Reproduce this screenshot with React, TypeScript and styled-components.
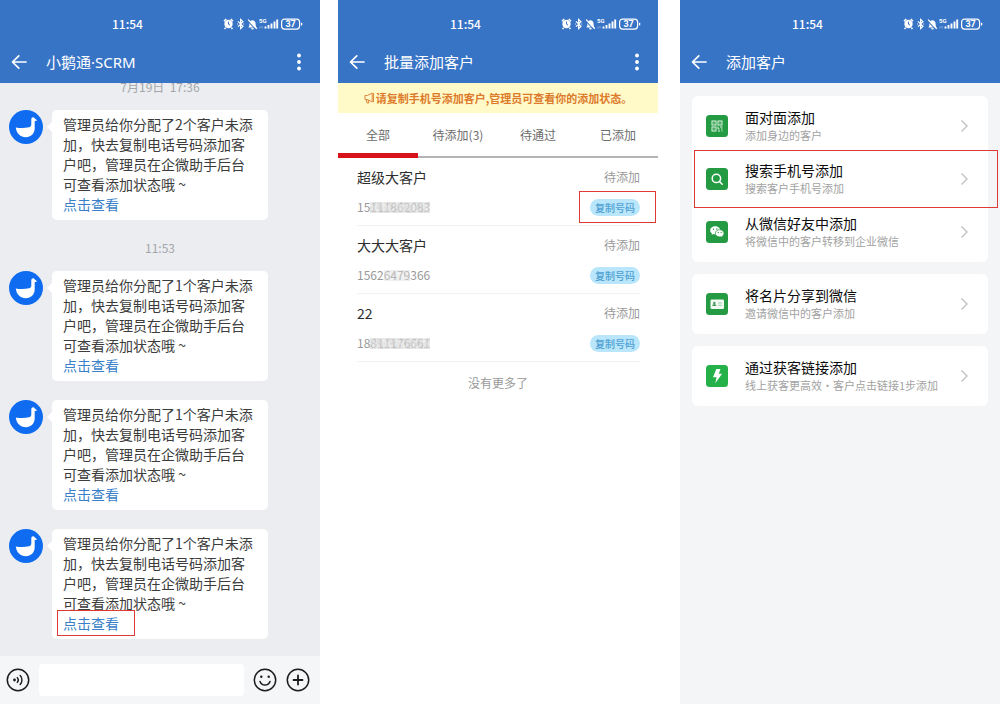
import React from 'react';
import styled, { createGlobalStyle, css } from 'styled-components';

const GlobalStyle = createGlobalStyle`
  *, *::before, *::after { box-sizing: border-box; }
  body {
    margin: 0;
    background: #ffffff;
    font-family: "Noto Sans CJK SC", "Noto Sans", sans-serif;
    font-size: 14px;
  }
  button, input { font: inherit; }
  h1, h2, p { margin: 0; font-weight: 400; }
`;

const Page = styled.main`
  display: flex;
  height: 100vh;
`;

const Phone = styled.section<{ $bg: string; $after?: number }>`
  flex: 1 1 0;
  min-width: 0;
  display: flex;
  flex-direction: column;
  background: ${(p) => p.$bg};
  margin-right: ${(p) => p.$after ?? 0}px;
`;

/* ---------- Header ---------- */

const Header = styled.header`
  flex: none;
  padding-bottom: 7px;
  background: #3874c6;
  color: #ffffff;
`;

const StatusBar = styled.div`
  display: flex;
  align-items: center;
  justify-content: space-between;
  height: 48px;
  padding: 0 17px 0 112px;
`;

const Clock = styled.span`
  font-size: 12px;
  font-weight: 500;
  line-height: 16px;
`;

const NavBar = styled.div`
  display: flex;
  align-items: center;
  height: 28px;
  padding: 0 13px 0 11px;
`;

const Title = styled.h1`
  flex: 1;
  margin-left: 19px;
  font-family: "Noto Sans", "Noto Sans CJK SC", sans-serif;
  font-size: 15px;
  line-height: 20px;
`;

const IconButton = styled.button`
  display: flex;
  align-items: center;
  justify-content: center;
  flex: none;
  padding: 0;
  border: 0;
  background: none;
  color: inherit;
  cursor: pointer;
`;

const StatusIcons = () => (
  <svg width="80" height="14" viewBox="0 0 80 14" fill="none" stroke="#fff" aria-hidden="true">
    <circle cx="5.5" cy="7" r="4.2" fill="#fff" stroke="none" />
    <path d="M1 4.200 3.200 2M10 4.200 7.800 2M2.600 10.600 1.600 12M8.400 10.600l1 1.400" strokeWidth="1.500" />
    <path d="M5.500 4.600V7.200L7 8.200" stroke="#3874c6" strokeWidth="1" />
    <path d="M15 4.400 20 9.300 17.600 11.600V2.400L20 4.700 15 9.600M14.200 7h.8M20.400 7h.8" strokeWidth="1.200" />
    <path d="M25.400 10.400c1-1 .9-2 1-3.600.1-2 1.300-3.500 3.100-3.500s3 1.500 3.100 3.500c.1 1.600 0 2.600 1 3.600z" fill="#fff" stroke="none" />
    <path d="M28.300 11.700h2.400" strokeWidth="1.300" />
    <path d="M24.800 3.800 32.600 12.400" stroke="#3874c6" strokeWidth="1.100" />
    <path d="M25.200 2.600 33.800 11.800" strokeWidth="1.300" />
    <text x="36" y="6" fill="#fff" stroke="none" fontSize="6" fontWeight="700" fontFamily="Roboto, sans-serif">5G</text>
    <path d="M37 9.500v2M39 9v2.500" strokeWidth=".8" opacity=".5" />
    <path d="M42.500 11.500v-2M45.500 11.500V8M48.500 11.500V6.500M51.500 11.500V4.500M54.200 11.500V2.500" strokeWidth="1.900" />
    <rect x="58.600" y="2.100" width="18" height="10" rx="3" strokeWidth="1.200" />
    <path d="M78.600 5.800v2.600" strokeWidth="1.300" />
    <text x="67.600" y="10.300" fill="#fff" stroke="none" fontSize="9" fontWeight="700" textAnchor="middle" fontFamily="Roboto, sans-serif">37</text>
  </svg>
);

const BackIcon = () => (
  <svg width="16" height="16" viewBox="0 0 16 16" fill="none" stroke="currentColor" strokeWidth="1.700" strokeLinecap="round" strokeLinejoin="round" aria-hidden="true">
    <path d="M15 8H1.600M7.800 1.800 1.500 8l6.300 6.200" />
  </svg>
);

const MoreIcon = () => (
  <svg width="16" height="20" viewBox="0 0 16 20" fill="currentColor" aria-hidden="true">
    <circle cx="8" cy="3.500" r="1.900" />
    <circle cx="8" cy="10" r="1.900" />
    <circle cx="8" cy="16.500" r="1.900" />
  </svg>
);

const PhoneHeader = ({ title, more }: { title: string; more?: boolean }) => (
  <Header>
    <StatusBar>
      <Clock>11:54</Clock>
      <StatusIcons />
    </StatusBar>
    <NavBar>
      <IconButton type="button" aria-label="返回">
        <BackIcon />
      </IconButton>
      <Title>{title}</Title>
      {more && (
        <IconButton type="button" aria-label="更多">
          <MoreIcon />
        </IconButton>
      )}
    </NavBar>
  </Header>
);

/* Red annotation frame drawn over the content it points at */
const highlight = css`
  content: "";
  position: absolute;
  border: 1px solid #dc3a35;
  pointer-events: none;
`;

/* ---------- Chat ---------- */

const Thread = styled.div`
  flex: 1 1 0;
  min-height: 0;
  display: flex;
  flex-direction: column;
  justify-content: flex-end;
  overflow: hidden;
  padding: 0 52px 17px 9px;
`;

const Timestamp = styled.time`
  flex: none;
  align-self: center;
  margin: 20px 0 15px 43px;
  color: #a4a6aa;
  font-size: 12px;
  line-height: 16px;
  white-space: pre;
`;

const Message = styled.article`
  flex: none;
  display: flex;
  align-items: flex-start;
  gap: 9px;

  & + & { margin-top: 19px; }
`;

const Bubble = styled.div`
  position: relative;
  flex: 1;
  padding: 4px 11px 6px;
  border-radius: 5px;
  background: #ffffff;
  color: #3c3c3c;
  line-height: 20px;

  &::before {
    content: "";
    position: absolute;
    top: 12px;
    left: -5px;
    border: 5px solid transparent;
    border-left-width: 0;
    border-right-color: #ffffff;
  }
`;

const ViewLink = styled.a<{ $marked?: boolean }>`
  position: relative;
  display: inline-block;
  color: #3a7fc8;
  text-decoration: none;

  ${(p) =>
    p.$marked &&
    css`
      &::after {
        ${highlight}
        inset: -3px -16px -3px -6px;
      }
    `}
`;

const GooseAvatar = () => (
  <svg width="34" height="34" viewBox="0 0 34 34" aria-hidden="true">
    <circle cx="17" cy="17" r="17" fill="#0f6cf0" />
    <path d="M6.800 17.400c4 .8 9 .8 13.200-.1 1.500-.4 2.300-1.300 2.300-2.800V9.200c0-1.300.8-2 1.800-2 .8 0 1.300.4 1.500 1l2.100 1.800c.3.300.2.700-.2.800l-1.800.3v7.100c0 5.200-3.800 9-8.900 9-5.200 0-9.500-4-10-9.800z" fill="#fff" />
  </svg>
);

const ChatMessage = ({ count, marked }: { count: number; marked?: boolean }) => (
  <Message>
    <GooseAvatar />
    <Bubble>
      <p>{`管理员给你分配了${count}个客户未添加，快去复制电话号码添加客户吧，管理员在企微助手后台可查看添加状态哦 ~`}</p>
      <ViewLink href="#view" $marked={marked}>点击查看</ViewLink>
    </Bubble>
  </Message>
);

const Composer = styled.form`
  flex: none;
  display: flex;
  align-items: center;
  gap: 9px;
  height: 48px;
  padding: 0 10px 0 6px;
  background: #f4f6f8;
  color: #1c1c1c;
`;

const MessageInput = styled.input`
  flex: 1;
  min-width: 0;
  height: 32px;
  padding: 0 8px;
  border: 0;
  border-radius: 4px;
  background: #ffffff;
`;

const roundIcon = {
  width: 24,
  height: 24,
  viewBox: '0 0 24 24',
  fill: 'none',
  stroke: 'currentColor',
  strokeWidth: 1.5,
  strokeLinecap: 'round' as const,
  'aria-hidden': true,
};

const VoiceIcon = () => (
  <svg {...roundIcon}>
    <circle cx="12" cy="12" r="10.700" />
    <circle cx="8.500" cy="12" r="1.400" fill="currentColor" stroke="none" />
    <path d="M11.300 9.600a3.600 3.600 0 0 1 0 4.800M14.200 7.600a6.400 6.400 0 0 1 0 8.800" strokeWidth="1.400" />
  </svg>
);

const SmileIcon = () => (
  <svg {...roundIcon}>
    <circle cx="12" cy="12" r="10.700" />
    <path d="M7 13.500c.8 2.300 2.700 3.600 5 3.600s4.200-1.300 5-3.600" />
    <circle cx="8.300" cy="8.800" r="1.200" fill="currentColor" stroke="none" />
    <circle cx="15.700" cy="8.800" r="1.200" fill="currentColor" stroke="none" />
  </svg>
);

const PlusIcon = () => (
  <svg {...roundIcon}>
    <circle cx="12" cy="12" r="10.700" />
    <path d="M12 7.500v9M7.500 12h9" strokeWidth="1.800" />
  </svg>
);

/* ---------- Customer list ---------- */

const Notice = styled.p`
  flex: none;
  display: flex;
  align-items: center;
  justify-content: center;
  gap: 2px;
  height: 30px;
  background: #fffac8;
  color: #dd7a2c;
  font-size: 11px;
  font-weight: 700;
  white-space: nowrap;
`;

const Tabs = styled.nav`
  flex: none;
  display: flex;
  height: 45px;
  border-bottom: 2px solid #b4b4b4;
`;

const Tab = styled.button<{ $active?: boolean }>`
  flex: 1 1 0;
  margin-bottom: -2px;
  padding: 4px 0 0;
  border: 0;
  border-bottom: 5px solid ${(p) => (p.$active ? '#d7121a' : 'transparent')};
  background: none;
  color: #6c6c6c;
  font-size: 12px;
  line-height: 36px;
  white-space: nowrap;
  cursor: pointer;
`;

const CustomerList = styled.ul`
  margin: 0;
  padding: 0 18px 0 19px;
  list-style: none;
`;

const Customer = styled.li`
  display: grid;
  grid-template-columns: 1fr auto;
  align-items: center;
  justify-items: start;
  row-gap: 10px;
  padding: 9px 0 8px;
  border-bottom: 1px solid #f3f3f3;
  line-height: 20px;
`;

const Name = styled.h2`
  color: #2e2e2e;
  font-size: 14px;
  line-height: 20px;
`;

const State = styled.span`
  justify-self: end;
  color: #999999;
  font-size: 12px;
`;

const PhoneNumber = styled.span`
  display: flex;
  color: #999999;
  font-size: 12px;
`;

const Censored = styled.span<{ $light?: boolean }>`
  position: relative;
  color: #a8a8a8;

  svg {
    position: absolute;
    left: 0;
    top: 5px;
    width: 100%;
    height: 11px;
    opacity: ${(p) => (p.$light ? 0.4 : 0.7)};
  }
`;

const CopyButton = styled.button<{ $marked?: boolean }>`
  position: relative;
  height: 17px;
  padding: 0 5px;
  border: 0;
  border-radius: 9px;
  background: #b9e6fb;
  color: #4d9fd2;
  font-size: 10px;
  font-weight: 500;
  line-height: 17px;
  cursor: pointer;

  ${(p) =>
    p.$marked &&
    css`
      &::after {
        ${highlight}
        inset: -8px -16px -7px -11px;
      }
    `}
`;

const EndNote = styled.p`
  padding-top: 13px;
  color: #999999;
  font-size: 12px;
  line-height: 16px;
  text-align: center;
`;

const HornIcon = () => (
  <svg width="10" height="12" viewBox="0 0 10 12" fill="none" stroke="currentColor" strokeWidth=".9" strokeLinejoin="round" aria-hidden="true">
    <path d="M1 3.500h2.500L8.200 1v9L3.500 7.500H1zM2.200 7.600 3 11h1.800L4 7.800M9.500 1v9" />
  </svg>
);

const SHADES = ['#e0e0e0', '#cfcfcf', '#ececec', '#d6d6d6', '#f4f4f4', '#dadada', '#c8c8c8'];

const Mosaic = ({ cells }: { cells: number }) => (
  <svg viewBox={`0 0 ${cells * 4} 12`} preserveAspectRatio="none" aria-hidden="true">
    {Array.from({ length: cells * 3 }, (_, i) => (
      <rect
        key={i}
        x={Math.floor(i / 3) * 4}
        y={(i % 3) * 4}
        width="4"
        height="4"
        fill={SHADES[(i * 5 + Math.floor(i / 4)) % SHADES.length]}
      />
    ))}
  </svg>
);

const CUSTOMERS = [
  { name: '超级大客户', start: '15', hidden: '111862083', end: '' },
  { name: '大大大客户', start: '1562', hidden: '6479', end: '366' },
  { name: '22', start: '18', hidden: '811176661', end: '' },
];

/* ---------- Add options ---------- */

const Options = styled.div`
  display: flex;
  flex-direction: column;
  gap: 12px;
  padding: 13px 12px;
`;

const Card = styled.div`
  padding: 3px 0 4px;
  border-radius: 6px;
  background: #ffffff;
`;

const Option = styled.button<{ $marked?: boolean }>`
  position: relative;
  display: flex;
  align-items: center;
  width: 100%;
  height: 53px;
  padding: 0 19px 0 14px;
  border: 0;
  background: none;
  text-align: left;
  cursor: pointer;

  ${(p) =>
    p.$marked &&
    css`
      &::after {
        ${highlight}
        inset: -2px -10px -3px 2px;
      }
    `}
`;

const OptionText = styled.span`
  flex: 1;
  min-width: 0;
  display: flex;
  flex-direction: column;
  margin-left: 17px;
`;

const OptionTitle = styled.span`
  color: #0c0c0c;
  font-size: 14px;
  line-height: 19px;
`;

const OptionHint = styled.span`
  color: #a2a2a2;
  font-size: 11px;
  line-height: 16px;
  white-space: nowrap;
`;

const Tile = ({ fill = '#249a43', children }: { fill?: string; children: React.ReactNode }) => (
  <svg width="22" height="22" viewBox="0 0 22 22" aria-hidden="true">
    <rect width="22" height="22" rx="3.500" fill={fill} />
    {children}
  </svg>
);

const QrTile = () => (
  <Tile>
    <g fill="none" stroke="#e4f5e8" strokeWidth="1">
      <rect x="6" y="6" width="4" height="4" />
      <rect x="12" y="6" width="4" height="4" />
      <rect x="6" y="12" width="4" height="4" />
      <path d="M7.500 8h1M13.500 8h1M7.500 14h1M12 11.500v2.500h1.500M14 12h2.500M15 14h1.500M12 16h2M16 15.500v1" />
    </g>
  </Tile>
);

const SearchTile = () => (
  <Tile>
    <circle cx="10.400" cy="10.400" r="4.200" fill="none" stroke="#fff" strokeWidth="1.500" />
    <path d="m13.500 13.500 2.700 2.700" stroke="#fff" strokeWidth="1.500" strokeLinecap="round" />
  </Tile>
);

const WechatTile = () => (
  <Tile>
    <path d="M9.200 5.300c-2.800 0-5 1.800-5 4.100 0 1.300.7 2.400 1.800 3.100l-.4 1.500 1.700-.9c.6.2 1.200.3 1.900.3 2.800 0 5-1.800 5-4s-2.200-4.100-5-4.100z" fill="#fff" />
    <path d="M13.700 8.700c-2.500 0-4.400 1.600-4.400 3.600s1.900 3.600 4.400 3.600c.5 0 1-.1 1.500-.2l1.500.8-.4-1.300c1-.7 1.700-1.700 1.700-2.900 0-2-1.900-3.600-4.300-3.600z" fill="#fff" stroke="#249a43" strokeWidth=".7" />
    <g fill="#249a43">
      <circle cx="7.500" cy="8.200" r=".7" />
      <circle cx="10.800" cy="8" r=".7" />
      <circle cx="12.300" cy="11.400" r=".6" />
      <circle cx="15.200" cy="11.400" r=".6" />
    </g>
  </Tile>
);

const CardTile = () => (
  <Tile>
    <rect x="4.500" y="6.500" width="13.500" height="9.500" rx="1.200" fill="#f2faf4" />
    <g fill="#4c9a60">
      <circle cx="8.300" cy="10" r="1.200" />
      <path d="M6.200 13c.1-1.300.9-2 2.100-2s2 .7 2.100 2z" />
    </g>
    <path d="M12 10h4M12 12.300h4" stroke="#9ccba8" strokeWidth="1" />
  </Tile>
);

const BoltTile = () => (
  <Tile fill="#25b14a">
    <path d="M10.300 4h4.200l-1.700 4.800h3.300L9.300 18.200l1.300-6H7z" fill="#fff" />
  </Tile>
);

const Chevron = () => (
  <svg width="9" height="14" viewBox="0 0 9 14" fill="none" stroke="#c2c2c2" strokeWidth="1.400" aria-hidden="true">
    <path d="m1.500 1.500 5.500 5.500-5.500 5.500" />
  </svg>
);

type OptionItem = { title: string; hint: string; Icon: React.FC; marked?: boolean };

const OPTION_GROUPS: OptionItem[][] = [
  [
    { title: '面对面添加', hint: '添加身边的客户', Icon: QrTile },
    { title: '搜索手机号添加', hint: '搜索客户手机号添加', Icon: SearchTile, marked: true },
    { title: '从微信好友中添加', hint: '将微信中的客户转移到企业微信', Icon: WechatTile },
  ],
  [{ title: '将名片分享到微信', hint: '邀请微信中的客户添加', Icon: CardTile }],
  [{ title: '通过获客链接添加', hint: '线上获客更高效·客户点击链接1步添加', Icon: BoltTile }],
];

export default function App() {
  return (
    <>
      <GlobalStyle />
      <Page>
        <Phone $bg="#ebedf0" $after={18}>
          <PhoneHeader title="小鹅通·SCRM" more />
          <Thread>
            <Timestamp>7月19日  17:36</Timestamp>
            <ChatMessage count={2} />
            <Timestamp>11:53</Timestamp>
            <ChatMessage count={1} />
            <ChatMessage count={1} />
            <ChatMessage count={1} marked />
          </Thread>
          <Composer onSubmit={(e) => e.preventDefault()}>
            <IconButton type="button" aria-label="语音"><VoiceIcon /></IconButton>
            <MessageInput type="text" aria-label="消息" />
            <IconButton type="button" aria-label="表情"><SmileIcon /></IconButton>
            <IconButton type="button" aria-label="添加"><PlusIcon /></IconButton>
          </Composer>
        </Phone>

        <Phone $bg="#ffffff" $after={22}>
          <PhoneHeader title="批量添加客户" more />
          <Notice>
            <HornIcon />
            请复制手机号添加客户,管理员可查看你的添加状态。
          </Notice>
          <Tabs>
            <Tab type="button" $active>全部</Tab>
            <Tab type="button">待添加(3)</Tab>
            <Tab type="button">待通过</Tab>
            <Tab type="button">已添加</Tab>
          </Tabs>
          <CustomerList>
            {CUSTOMERS.map((c, i) => (
              <Customer key={c.name}>
                <Name>{c.name}</Name>
                <State>待添加</State>
                <PhoneNumber>
                  {c.start}
                  <Censored $light={c.end !== ''}>
                    {c.hidden}
                    <Mosaic cells={c.hidden.length * 2} />
                  </Censored>
                  {c.end}
                </PhoneNumber>
                <CopyButton type="button" $marked={i === 0}>复制号码</CopyButton>
              </Customer>
            ))}
          </CustomerList>
          <EndNote>没有更多了</EndNote>
        </Phone>

        <Phone $bg="#f3f5f7">
          <PhoneHeader title="添加客户" />
          <Options>
            {OPTION_GROUPS.map((group, g) => (
              <Card key={g}>
                {group.map(({ title, hint, Icon, marked }) => (
                  <Option key={title} type="button" $marked={marked}>
                    <Icon />
                    <OptionText>
                      <OptionTitle>{title}</OptionTitle>
                      <OptionHint>{hint}</OptionHint>
                    </OptionText>
                    <Chevron />
                  </Option>
                ))}
              </Card>
            ))}
          </Options>
        </Phone>
      </Page>
    </>
  );
}
